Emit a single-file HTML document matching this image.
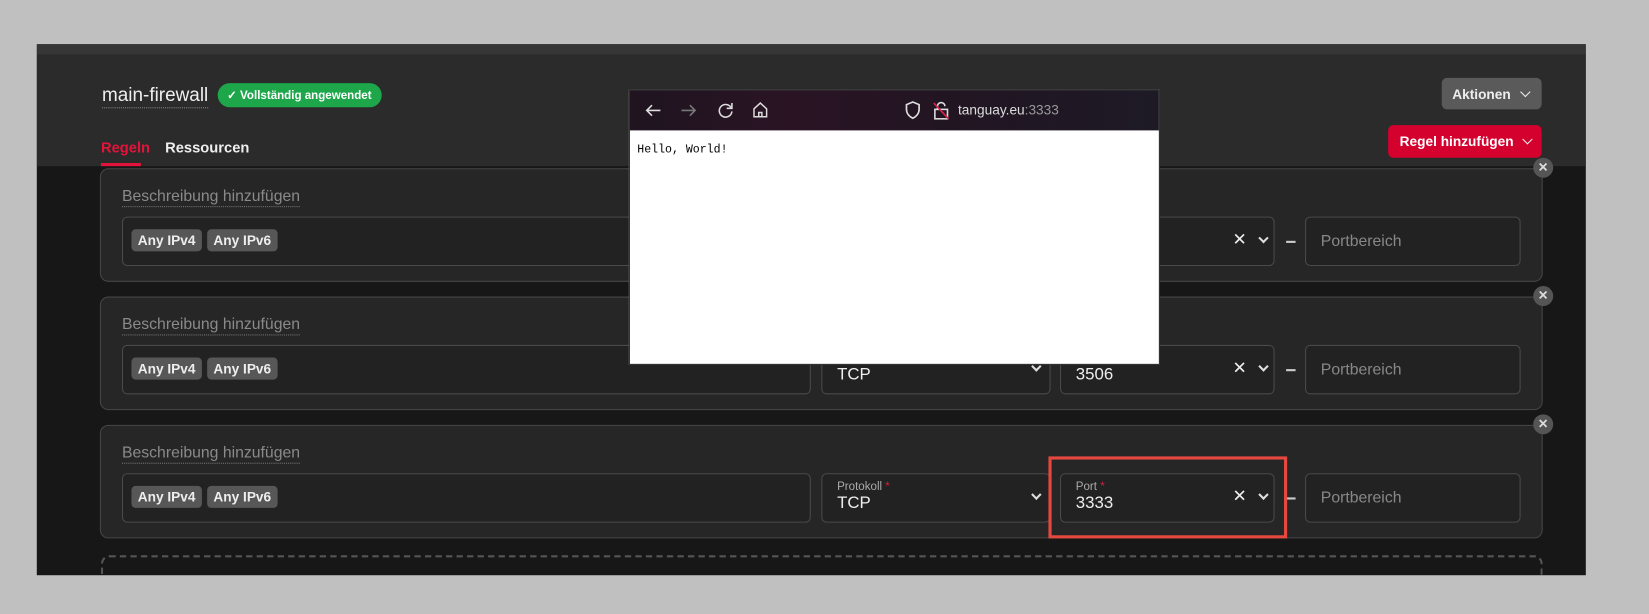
<!DOCTYPE html>
<html><head><meta charset="utf-8"><style>
*{box-sizing:border-box;margin:0;padding:0}
body{width:1649px;height:614px;background:#c0c0c0;position:relative;overflow:hidden;font-family:"Liberation Sans",sans-serif}
#wrap{position:absolute;left:0;top:0;width:1568px;height:584px;transform:scale(1.0516);transform-origin:0 0}
.app{position:absolute;left:35px;top:42px;width:1473px;height:505px;background:#171717;overflow:hidden}
.strip{position:absolute;left:0;top:0;width:100%;height:10px;background:#363636}
.hdr{position:absolute;left:0;top:10px;width:100%;height:106px;background:#2b2b2b}
.abs{position:absolute}
.card{position:absolute;left:60px;width:1372px;height:108px;background:#262626;border:1px solid #464646;border-radius:8px}
.desc{position:absolute;left:20px;top:17px;color:#8a8a8a;font-size:15px;border-bottom:1px dotted #777;padding-bottom:1px}
.inp{position:absolute;top:45px;height:47px;border:1px solid #4a4a4a;border-radius:5px;background:#222}
.tag{display:inline-block;background:#575757;color:#eee;font-weight:bold;font-size:13px;padding:3px 6px;border-radius:4px;margin-right:5px}
.lbl{position:absolute;left:14px;top:6px;font-size:11px;color:#aaa}
.lbl b{color:#d0223d;font-weight:normal}
.val{position:absolute;left:14px;top:19px;font-size:16px;color:#eee}
.ph{position:absolute;left:14px;top:14px;font-size:15px;color:#888}
.chev{position:absolute;top:16px;width:7px;height:7px;border-right:2px solid #ddd;border-bottom:2px solid #ddd;transform:rotate(45deg)}
.bchev{display:inline-block;width:7px;height:7px;border-right:1.5px solid #eee;border-bottom:1.5px solid #eee;transform:rotate(45deg);margin-left:10px;position:relative;top:-3px}
.x{position:absolute;top:11px;color:#eee;font-size:16px}
.dash{position:absolute;top:68px;width:9px;height:2px;background:#ccc}
.cls{position:absolute;right:-11px;top:-11px;width:19px;height:19px;border-radius:50%;background:#555;color:#ddd;font-size:12px;text-align:center;line-height:19px;font-weight:bold}
</style></head><body>
<div id="wrap">
<div class="app">
<div class="strip"></div>
<div class="hdr">
 <div class="abs" style="left:62px;top:28px;color:#eee;font-size:18px;border-bottom:1px dotted #888;padding-bottom:1px">main-firewall</div>
 <div class="abs" style="left:172px;top:27px;background:#1ea64b;color:#fff;font-size:11px;font-weight:bold;border-radius:12px;padding:5px 10px 5px 9px">✓ Vollständig angewendet</div>
 <div class="abs" style="left:61px;top:80px;color:#e3143b;font-size:14px;font-weight:bold">Regeln</div>
 <div class="abs" style="left:61px;top:103px;width:38px;height:3px;background:#e3143b"></div>
 <div class="abs" style="left:122px;top:80px;color:#eee;font-size:14px;font-weight:bold">Ressourcen</div>
 <div class="abs" style="left:1336px;top:22px;width:95px;height:30px;background:#5a5a5a;border-radius:5px;color:#eee;font-size:13px;font-weight:bold;padding:8px 0 0 10px">Aktionen<span class="bchev"></span></div>
 <div class="abs" style="left:1285px;top:67px;width:146px;height:31px;background:#d4002d;border-radius:5px;color:#fff;font-size:13px;font-weight:bold;padding:8px 0 0 11px">Regel hinzufügen<span class="bchev"></span></div>
</div>

<div class="card" style="top:118px">
 <div class="desc">Beschreibung hinzufügen</div>
 <div class="inp" style="left:20px;width:655px;padding:11px 8px"><span class="tag">Any IPv4</span><span class="tag">Any IPv6</span></div>
 <div class="inp" style="left:902px;width:214px"><span class="x" style="left:173px">✕</span><span class="chev" style="left:199px"></span></div>
 <div class="dash" style="left:1127px;top:68px"></div>
 <div class="inp" style="left:1145px;width:205px"><span class="ph">Portbereich</span></div>
 <div class="cls">✕</div>
</div>
<div class="card" style="top:240px">
 <div class="desc">Beschreibung hinzufügen</div>
 <div class="inp" style="left:20px;width:655px;padding:11px 8px"><span class="tag">Any IPv4</span><span class="tag">Any IPv6</span></div>
 <div class="inp" style="left:685px;width:218px"><span class="val">TCP</span><span class="chev" style="left:200px"></span></div>
 <div class="inp" style="left:912px;width:204px"><span class="val">3506</span><span class="x" style="left:163px">✕</span><span class="chev" style="left:189px"></span></div>
 <div class="dash" style="left:1127px"></div>
 <div class="inp" style="left:1145px;width:205px"><span class="ph">Portbereich</span></div>
 <div class="cls">✕</div>
</div>
<div class="card" style="top:362px">
 <div class="desc">Beschreibung hinzufügen</div>
 <div class="inp" style="left:20px;width:655px;padding:11px 8px"><span class="tag">Any IPv4</span><span class="tag">Any IPv6</span></div>
 <div class="inp" style="left:685px;width:218px"><span class="lbl">Protokoll <b>*</b></span><span class="val">TCP</span><span class="chev" style="left:200px"></span></div>
 <div class="inp" style="left:912px;width:204px"><span class="lbl">Port <b>*</b></span><span class="val">3333</span><span class="x" style="left:163px">✕</span><span class="chev" style="left:189px"></span></div>
 <div class="dash" style="left:1127px"></div>
 <div class="inp" style="left:1145px;width:205px"><span class="ph">Portbereich</span></div>
 <div class="cls">✕</div>
</div>
<div class="abs" style="left:962px;top:392px;width:227px;height:78px;border:3px solid #e5483f"></div>
<div class="abs" style="left:61px;top:486px;width:1371px;height:40px;border:2px dashed #555;border-radius:8px"></div>
</div>

<div class="abs" style="left:598px;top:85px;width:505px;height:262px;background:#fff;border:1px solid #222">
 <div style="height:38px;background:linear-gradient(90deg,#1f1420,#2a1424 30%,#221522 60%,#1d1a26);position:relative;color:#ddd">
  <svg class="abs" style="left:14px;top:11px" width="16" height="16" viewBox="0 0 16 16"><path d="M15 8H2M7 3L2 8l5 5" fill="none" stroke="#ddd" stroke-width="1.5"/></svg>
  <svg class="abs" style="left:48px;top:11px" width="16" height="16" viewBox="0 0 16 16"><path d="M1 8h13M9 3l5 5-5 5" fill="none" stroke="#777" stroke-width="1.5"/></svg>
  <svg class="abs" style="left:83px;top:11px" width="16" height="16" viewBox="0 0 16 16"><path d="M13 5A6 6 0 1 0 14 9" fill="none" stroke="#ddd" stroke-width="1.5"/><path d="M14 1v5h-5" fill="none" stroke="#ddd" stroke-width="1.5"/></svg>
  <svg class="abs" style="left:116px;top:10px" width="16" height="17" viewBox="0 0 16 17"><path d="M2 7.5L8 2l6 5.5V15H2z M6.5 15v-4h3v4" fill="none" stroke="#ddd" stroke-width="1.4"/></svg>
  <svg class="abs" style="left:261px;top:10px" width="16" height="18" viewBox="0 0 16 18"><path d="M8 1L2 3.5V8c0 4 3 7 6 8.5 3-1.5 6-4.5 6-8.5V3.5z" fill="none" stroke="#ddd" stroke-width="1.6"/></svg>
  <svg class="abs" style="left:288px;top:10px" width="16" height="18" viewBox="0 0 16 18"><rect x="2" y="8" width="12" height="9" fill="none" stroke="#ddd" stroke-width="1.5"/><path d="M4.5 8V5a3.5 3.5 0 017 0" fill="none" stroke="#ddd" stroke-width="1.5"/><path d="M1 2L15 17" stroke="#e0224a" stroke-width="1.5"/></svg>
  <span class="abs" style="left:312px;top:11px;font-size:13px">tanguay.eu<span style="color:#999">:3333</span></span>
 </div>
 <div style="padding:13px 7px;font-family:'Liberation Mono',monospace;font-size:11px;color:#000">Hello, World!</div>
</div>
</div>
</body></html>
